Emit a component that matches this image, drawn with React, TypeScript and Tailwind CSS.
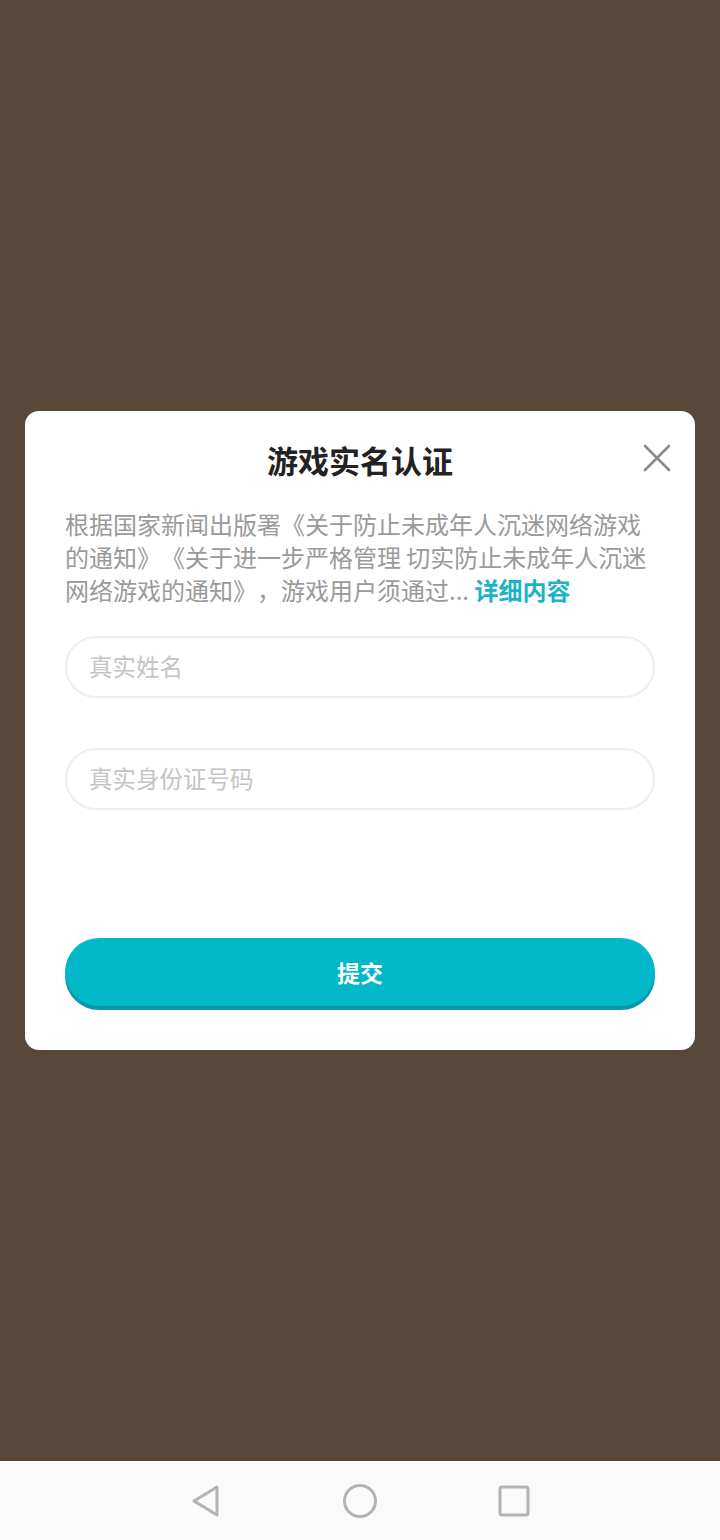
export default function App() {
  return (
    <div
      className="w-[720px] h-[1540px] flex flex-col bg-[#574839]"
      style={{ fontFamily: '"Noto Sans CJK SC", "Noto Sans", sans-serif' }}
    >
      <div className="h-[1461px] flex items-center justify-center">
        <div className="w-[670px] bg-white rounded-[14px] px-[40px] pt-[29px] pb-[44px]">
          <div className="relative h-[40px] flex items-center justify-center">
            <h1 className="text-[31px] leading-[40px] font-bold text-[#222]">游戏实名认证</h1>
            <button className="absolute right-[-20px] top-[0px] w-[36px] h-[36px] flex items-center justify-center">
              <svg width="30" height="30" viewBox="0 0 30 30" fill="none" stroke="#8a8a8a" strokeWidth="2.6" strokeLinecap="round">
                <path d="M3 3 L27 27 M27 3 L3 27" />
              </svg>
            </button>
          </div>

          <div className="mt-[27px] text-[24px] leading-[33px] text-[#9a9a9a] whitespace-nowrap [text-spacing-trim:space-all]">
            <div>根据国家新闻出版署《关于防止未成年人沉迷网络游戏</div>
            <div>的通知》《关于进一步严格管理 切实防止未成年人沉迷</div>
            <div>
              网络游戏的通知》，游戏用户须通过...{' '}
              <span className="font-bold text-[#1ab4c5]">详细内容</span>
            </div>
          </div>

          <div className="mt-[30px] h-[62px] rounded-full border-2 border-[#eeeeee] flex items-center px-[22px]">
            <span className="text-[23.5px] text-[#c4c4c4]">真实姓名</span>
          </div>
          <div className="mt-[50px] h-[62px] rounded-full border-2 border-[#eeeeee] flex items-center px-[22px]">
            <span className="text-[23.5px] text-[#c4c4c4]">真实身份证号码</span>
          </div>

          <button className="mt-[128px] w-full h-[68px] rounded-full bg-[#00b8c8] shadow-[0_4px_0_#0898a8] flex items-center justify-center">
            <span className="text-[23px] font-bold text-white">提交</span>
          </button>
        </div>
      </div>

      <div className="h-[79px] bg-[#fafafa] flex items-center justify-center gap-[120px]">
        <svg width="32" height="34" viewBox="0 0 32 34" fill="none" stroke="#b3b3b3" strokeWidth="3" strokeLinejoin="round">
          <path d="M27 3 L27 31 L4 17 Z" />
        </svg>
        <svg width="36" height="36" viewBox="0 0 36 36" fill="none" stroke="#b3b3b3" strokeWidth="3">
          <circle cx="18" cy="18" r="15.5" />
        </svg>
        <svg width="32" height="32" viewBox="0 0 32 32" fill="none" stroke="#b3b3b3" strokeWidth="3">
          <rect x="2" y="2" width="28" height="28" rx="2" />
        </svg>
      </div>
    </div>
  );
}
